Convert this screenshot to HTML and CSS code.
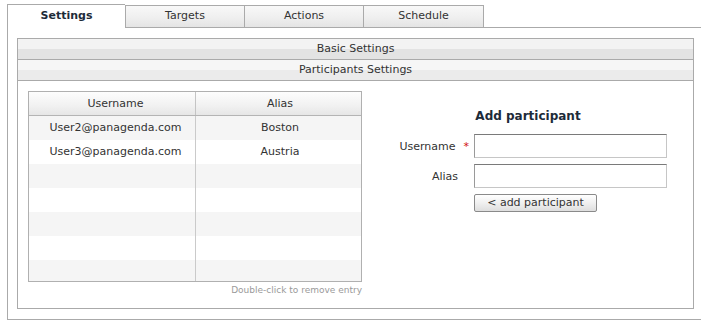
FILE: index.html
```html
<!DOCTYPE html>
<html>
<head>
<meta charset="utf-8">
<link rel="stylesheet" href="styles.css">
</head>
<body>
<div class="tabs">
  <div class="tab tab-active">Settings</div>
  <div class="tab">Targets</div>
  <div class="tab">Actions</div>
  <div class="tab tab-last">Schedule</div>
</div>
<div class="panel">
  <div class="box">
    <div class="section-head section-basic">Basic Settings</div>
    <div class="section-head section-part">Participants Settings</div>
    <div class="content">
      <div class="list-col">
        <div class="grid">
          <div class="grid-head">
            <div class="cell cell-user">Username</div>
            <div class="cell cell-alias">Alias</div>
          </div>
          <div class="grid-body">
            <div class="row row-odd"><div class="cell cell-user">User2@panagenda.com</div><div class="cell cell-alias">Boston</div></div>
            <div class="row"><div class="cell cell-user">User3@panagenda.com</div><div class="cell cell-alias">Austria</div></div>
            <div class="row row-odd"><div class="cell cell-user"></div><div class="cell cell-alias"></div></div>
            <div class="row"><div class="cell cell-user"></div><div class="cell cell-alias"></div></div>
            <div class="row row-odd"><div class="cell cell-user"></div><div class="cell cell-alias"></div></div>
            <div class="row"><div class="cell cell-user"></div><div class="cell cell-alias"></div></div>
            <div class="row row-odd"><div class="cell cell-user"></div><div class="cell cell-alias"></div></div>
          </div>
        </div>
        <div class="hint">Double-click to remove entry</div>
      </div>
      <div class="form-col">
        <div class="form">
          <div class="form-title">Add participant</div>
          <label class="form-label">Username<span class="req">*</span></label>
          <input class="field" type="text">
          <label class="form-label form-label-alias">Alias</label>
          <input class="field" type="text">
          <button class="add-btn" type="button">&lt; add participant</button>
        </div>
      </div>
    </div>
  </div>
</div>
</body>
</html>
```
FILE: styles.css
```css
html, body {
  margin: 0;
  padding: 0;
  background: #fff;
}
body {
  font-family: "DejaVu Sans", Verdana, sans-serif;
  font-size: 11px;
  color: #333;
}
.tabs {
  display: flex;
  align-items: flex-start;
  padding: 4px 0 0 7px;
}
.tab {
  box-sizing: border-box;
  width: 119px;
  height: 22px;
  margin-top: 1px;
  border-style: solid;
  border-color: #aaa;
  border-width: 1px 0 0 1px;
  background: linear-gradient(#f8f8f8, #efefef 55%, #e4e4e4);
  text-align: center;
  line-height: 20px;
  color: #333;
}
.tab-active {
  position: relative;
  z-index: 1;
  width: 118px;
  height: 24px;
  margin-top: 0;
  background: #fff;
  font-weight: bold;
  color: #1d2b39;
  line-height: 22px;
}
.tab-last {
  width: 121px;
  border-right-width: 1px;
}
.panel {
  margin: -1px 0 0 7px;
  border: 1px solid #aaa;
  border-right: none;
  padding: 10px 0 10px 9px;
}
.box {
  box-sizing: border-box;
  width: 677px;
  border: 1px solid #aaa;
}
.section-head {
  height: 20px;
  line-height: 20px;
  border-bottom: 1px solid #aaa;
  text-align: center;
  color: #333;
}
.section-basic {
  background: linear-gradient(#f3f3f3 50%, #e3e3e3 50%);
}
.section-part {
  background: linear-gradient(#f6f6f6 50%, #ebebeb 50%);
}
.content {
  box-sizing: border-box;
  height: 227px;
  display: flex;
  padding: 10px 0 0 10px;
}
.list-col {
  width: 334px;
}
.grid {
  border: 1px solid #b0b0b0;
}
.grid-head {
  display: flex;
  height: 23px;
  line-height: 23px;
  border-bottom: 1px solid #b4b4b4;
  background: linear-gradient(#fdfdfd, #f1f1f1 60%, #e6e6e6);
}
.grid-head .cell-user {
  border-right-color: #c4c4c4;
}
.grid-body {
  height: 165px;
  overflow: hidden;
}
.row {
  display: flex;
  height: 24px;
  line-height: 24px;
  background: #fff;
}
.row-odd {
  background: #f5f5f5;
}
.cell {
  box-sizing: border-box;
  text-align: center;
  white-space: nowrap;
  overflow: hidden;
}
.cell-user {
  width: 167px;
  padding-left: 7px;
  border-right: 1px solid #cacaca;
}
.cell-alias {
  flex: 1;
  padding-left: 3px;
}
.hint {
  margin-top: 2px;
  text-align: right;
  font-size: 9px;
  line-height: 12px;
  color: #9a9a9a;
}
.form-col {
  flex: 1;
  padding-top: 18px;
}
.form {
  display: grid;
  grid-template-columns: 81px 193px;
  column-gap: 4px;
  row-gap: 6px;
  margin-left: 27px;
  align-items: center;
}
.form-title {
  grid-column: 1 / 3;
  height: 15px;
  line-height: 15px;
  margin-bottom: 4px;
  text-align: center;
  font-size: 12px;
  font-weight: bold;
  color: #1d2b39;
}
.form-label {
  text-align: right;
  padding-right: 1px;
  color: #333;
}
.form-label-alias {
  padding-right: 12px;
}
.req {
  color: #d01010;
  margin-left: 8px;
}
.field {
  box-sizing: border-box;
  width: 193px;
  height: 24px;
  margin: 0;
  padding: 2px 4px;
  border-style: solid;
  border-width: 1px;
  border-color: #7a7a7a #c6c6c6 #c6c6c6 #9a9a9a;
  background: #fff;
  font-family: inherit;
  font-size: 11px;
}
.add-btn {
  grid-column: 2;
  justify-self: start;
  box-sizing: border-box;
  width: 123px;
  height: 18px;
  margin: 0;
  padding: 0;
  border: 1px solid #8a8a8a;
  border-radius: 2px;
  background: linear-gradient(#ffffff, #f0f0f0 50%, #dedede);
  font-family: inherit;
  font-size: 11px;
  line-height: 16px;
  color: #333;
}
```
